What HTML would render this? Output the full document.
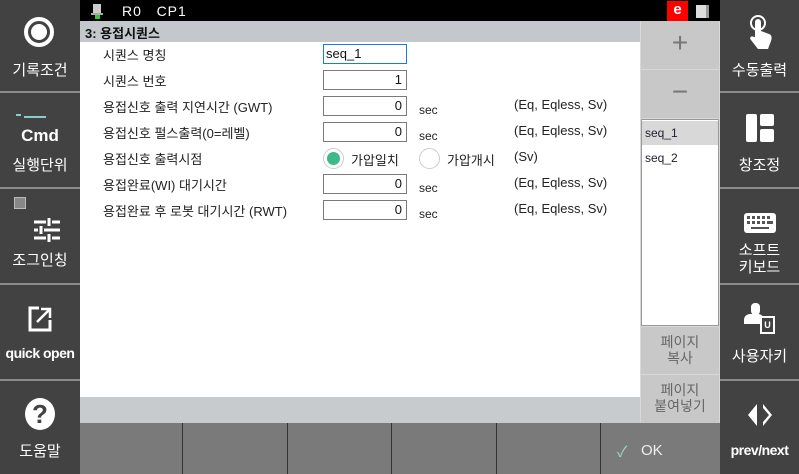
<!DOCTYPE html>
<html><head><meta charset="utf-8">
<style>
*{margin:0;padding:0;box-sizing:border-box}
body{width:799px;height:474px;overflow:hidden;background:#fff;font-family:"Liberation Sans","Noto Sans CJK KR",sans-serif;position:relative}
.a{position:absolute}
.side{background:#424242;top:0;height:474px;width:80px}
.div{position:absolute;left:0;width:80px;height:2px;background:#8a8a8a}
.lbl{position:absolute;width:80px;text-align:center;color:#fff;font-size:15px}
.t{position:absolute;font-size:13px;color:#222;white-space:nowrap}
.inp{position:absolute;left:323px;width:84px;height:20px;border:1px solid #7a7a7a;background:#fff;font-size:13px;text-align:right;padding-right:4px;line-height:18px;color:#111}
.sec{position:absolute;left:419px;font-size:12px;color:#222}
.eq{position:absolute;left:514px;font-size:13px;color:#222}
.gb{position:absolute;left:641px;width:78px;background:#c8c8c8;color:#666;text-align:center}
</style></head><body>
<div class="a side" style="left:0">
 <div class="div" style="top:91px"></div><div class="div" style="top:187px"></div><div class="div" style="top:283px"></div><div class="div" style="top:379px"></div>
 <div class="a" style="left:24px;top:17px;width:30px;height:30px;border:4px solid #fff;border-radius:50%"></div>
 <div class="a" style="left:31px;top:24px;width:16px;height:16px;background:#fff;border-radius:50%"></div>
 <div class="lbl" style="top:59px">기록조건</div>
 <div class="a" style="left:16px;top:108px;width:5px;height:8px;border-bottom:2px solid #8cc;"></div>
 <div class="a" style="left:24px;top:116px;width:22px;height:2px;background:#8cc"></div>
 <div class="lbl" style="top:126px;font-weight:bold;font-size:17px">Cmd</div>
 <div class="lbl" style="top:154px">실행단위</div>
 <div class="a" style="left:14px;top:197px;width:12px;height:12px;background:#888;border:1px solid #bbb"></div>
 <svg class="a" style="left:32px;top:217px" width="30" height="26"><g stroke="#fff" stroke-width="3"><path d="M2 5H14M20 5H28M2 13H6M12 13H28M2 21H14M20 21H28M17 1V9M9 9V17M17 17V25"/></g></svg>
 <div class="lbl" style="top:249px">조그인칭</div>
 <svg class="a" style="left:27px;top:305px" width="26" height="28"><path d="M12 3H3V25H23V15" stroke="#fff" stroke-width="3" fill="none"/><path d="M10 17L22 5M14 4H23V13" stroke="#fff" stroke-width="2.5" fill="none"/></svg>
 <div class="lbl" style="top:345px;font-weight:bold;font-size:14px;letter-spacing:-0.5px">quick open</div>
 <div class="a" style="left:25px;top:398px;width:30px;height:32px;background:#fff;border-radius:50%;color:#424242;font-weight:bold;font-size:26px;text-align:center;line-height:32px">?</div>
 <div class="lbl" style="top:440px">도움말</div>
</div>
<div class="a side" style="left:720px;width:79px">
 <div class="div" style="top:91px"></div><div class="div" style="top:187px"></div><div class="div" style="top:283px"></div><div class="div" style="top:379px"></div>
 <svg class="a" style="left:27px;top:15px" width="26" height="36"><path d="M8 22V7a3 3 0 0 1 6 0V16l8 3c3 1 3 4 2 7l-3 8H11L4 25c-2-2 0-5 3-3z" fill="#fff"/><circle cx="11" cy="8" r="7" stroke="#fff" stroke-width="2" fill="none"/></svg>
 <div class="lbl" style="top:59px;width:79px">수동출력</div>
 <div class="a" style="left:26px;top:114px;width:11px;height:28px;background:#fff;border-radius:2px"></div>
 <div class="a" style="left:40px;top:114px;width:14px;height:12px;background:#fff;border-radius:2px"></div>
 <div class="a" style="left:40px;top:129px;width:14px;height:13px;background:#fff;border-radius:2px"></div>
 <div class="lbl" style="top:154px;width:79px">창조정</div>
 <svg class="a" style="left:24px;top:213px" width="32" height="20"><rect x="0" y="0" width="32" height="20" rx="3" fill="#fff"/><g fill="#555"><rect x="3" y="3" width="3" height="3"/><rect x="8" y="3" width="3" height="3"/><rect x="13" y="3" width="3" height="3"/><rect x="18" y="3" width="3" height="3"/><rect x="23" y="3" width="3" height="3"/><rect x="3" y="8" width="3" height="3"/><rect x="8" y="8" width="3" height="3"/><rect x="13" y="8" width="3" height="3"/><rect x="18" y="8" width="3" height="3"/><rect x="23" y="8" width="6" height="3"/><rect x="7" y="14" width="18" height="2"/></g></svg>
 <div class="lbl" style="top:242px;width:79px;line-height:17px">소프트<br>키보드</div>
 <div class="a" style="left:31px;top:303px;width:9px;height:12px;background:#fff;border-radius:4px"></div>
 <div class="a" style="left:24px;top:314px;width:20px;height:10px;background:#fff;border-radius:6px 6px 0 0"></div>
 <div class="a" style="left:40px;top:316px;width:15px;height:18px;background:#424242;border:2px solid #fff;color:#fff;font-size:9px;font-weight:bold;text-align:center;line-height:14px">U</div>
 <div class="lbl" style="top:345px;width:79px">사용자키</div>
 <svg class="a" style="left:26px;top:402px" width="28" height="26"><path d="M11 2L2 13L11 24Z M17 2L26 13L17 24Z" fill="#fff"/><path d="M17 6L23 13L17 20Z" fill="#424242"/></svg>
 <div class="lbl" style="top:442px;width:79px;font-weight:bold;font-size:14px;letter-spacing:-0.5px">prev/next</div>
</div>
<div class="a" style="left:80px;top:0;width:640px;height:21px;background:#000"></div>
<div class="a" style="left:93px;top:4px;width:8px;height:9px;background:#ccc"></div>
<div class="a" style="left:91px;top:13px;width:12px;height:2px;background:#aaa"></div>
<div class="a" style="left:95px;top:15px;width:5px;height:4px;background:#3c3"></div>
<div class="a" style="left:122px;top:3px;color:#fff;font-size:14px;letter-spacing:1px">R0&nbsp;&nbsp;&nbsp;CP1</div>
<div class="a" style="left:667px;top:1px;width:21px;height:20px;background:#f00;color:#fff;font-weight:bold;font-size:15px;text-align:center;line-height:18px">e</div>
<div class="a" style="left:696px;top:5px;width:13px;height:13px;background:#ddd;border-right:3px solid #999"></div>
<div class="a" style="left:80px;top:21px;width:560px;height:21px;background:#c4c8cc"></div>
<div class="a" style="left:85px;top:23px;font-size:13px;font-weight:bold;color:#111">3: 용접시퀀스</div>
<div class="t" style="left:103px;top:45px">시퀀스 명칭</div>
<div class="inp" style="top:44px;text-align:left;padding-left:2px;border-color:#1a7fd4">seq_1</div>
<div class="t" style="left:103px;top:71px">시퀀스 번호</div>
<div class="inp" style="top:70px">1</div>
<div class="t" style="left:103px;top:97px">용접신호 출력 지연시간 (GWT)</div>
<div class="inp" style="top:96px">0</div><div class="sec" style="top:103px">sec</div><div class="eq" style="top:97px">(Eq, Eqless, Sv)</div>
<div class="t" style="left:103px;top:123px">용접신호 펄스출력(0=레벨)</div>
<div class="inp" style="top:122px">0</div><div class="sec" style="top:129px">sec</div><div class="eq" style="top:123px">(Eq, Eqless, Sv)</div>
<div class="t" style="left:103px;top:149px">용접신호 출력시점</div>
<div class="a" style="left:323px;top:148px;width:21px;height:21px;border:1px solid #ccc;border-radius:50%"></div>
<div class="a" style="left:327px;top:152px;width:13px;height:13px;background:#3dba88;border-radius:50%"></div>
<div class="t" style="left:351px;top:150px">가압일치</div>
<div class="a" style="left:419px;top:148px;width:21px;height:21px;border:1px solid #ccc;border-radius:50%"></div>
<div class="t" style="left:447px;top:150px">가압개시</div>
<div class="eq" style="top:149px">(Sv)</div>
<div class="t" style="left:103px;top:175px">용접완료(WI) 대기시간</div>
<div class="inp" style="top:174px">0</div><div class="sec" style="top:181px">sec</div><div class="eq" style="top:175px">(Eq, Eqless, Sv)</div>
<div class="t" style="left:103px;top:201px">용접완료 후 로봇 대기시간 (RWT)</div>
<div class="inp" style="top:200px">0</div><div class="sec" style="top:207px">sec</div><div class="eq" style="top:201px">(Eq, Eqless, Sv)</div>
<div class="a" style="left:640px;top:21px;width:80px;height:402px;background:#d8d8d8"></div>
<div class="gb" style="top:21px;height:48px;font-size:28px;line-height:44px;font-weight:300;color:#777">+</div>
<div class="gb" style="top:70px;height:48px;font-size:28px;line-height:44px;color:#777">−</div>
<div class="a" style="left:641px;top:119px;width:78px;height:207px;background:#fff;border:1px solid #999"></div>
<div class="a" style="left:642px;top:121px;width:76px;height:24px;background:#d8d8d8"></div>
<div class="a" style="left:645px;top:126px;font-size:12px;color:#223">seq_1</div>
<div class="a" style="left:645px;top:151px;font-size:12px;color:#223">seq_2</div>
<div class="gb" style="top:327px;height:47px;font-size:14px;line-height:16px;padding-top:7px">페이지<br>복사</div>
<div class="gb" style="top:375px;height:48px;font-size:14px;line-height:16px;padding-top:7px">페이지<br>붙여넣기</div>
<div class="a" style="left:80px;top:397px;width:560px;height:26px;background:#c8cbce"></div>
<div class="a" style="left:80px;top:423px;width:640px;height:51px;background:#7a7a7a"></div>
<div class="a" style="left:182px;top:423px;width:1px;height:51px;background:#333"></div>
<div class="a" style="left:287px;top:423px;width:1px;height:51px;background:#333"></div>
<div class="a" style="left:391px;top:423px;width:1px;height:51px;background:#333"></div>
<div class="a" style="left:496px;top:423px;width:1px;height:51px;background:#333"></div>
<div class="a" style="left:600px;top:423px;width:1px;height:51px;background:#333"></div>
<div class="a" style="left:617px;top:441px;color:#9cd8c0;font-size:15px">✓</div>
<div class="a" style="left:641px;top:442px;color:#eee;font-size:15px">OK</div>
</body></html>
